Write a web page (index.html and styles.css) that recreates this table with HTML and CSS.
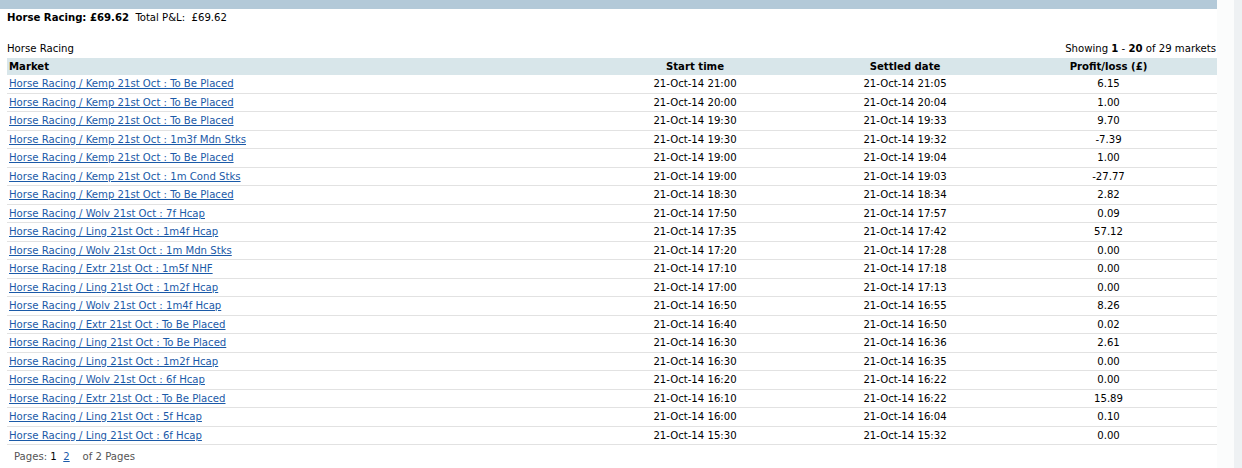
FILE: index.html
```html
<!DOCTYPE html>
<html>
<head>
<meta charset="utf-8">
<link rel="stylesheet" href="styles.css">
</head>
<body>
<div class="page">
  <div class="main">
    <div class="topbar"></div>
    <div class="summary"><b>Horse Racing: £69.62</b>&nbsp;&nbsp;Total P&amp;L:&nbsp;&nbsp;£69.62</div>
    <div class="labelrow">
      <span>Horse Racing</span>
      <span>Showing <b>1</b> - <b>20</b> of 29 markets</span>
    </div>
    <table class="markets">
      <colgroup>
        <col class="c-market"><col class="c-start"><col class="c-settled"><col class="c-pl">
      </colgroup>
      <thead>
        <tr><th class="left">Market</th><th>Start time</th><th>Settled date</th><th class="pl">Profit/loss (£)</th></tr>
      </thead>
      <tbody>
        <tr><td class="left"><a href="#">Horse Racing / Kemp 21st Oct : To Be Placed</a></td><td>21-Oct-14 21:00</td><td>21-Oct-14 21:05</td><td class="pl">6.15</td></tr>
        <tr><td class="left"><a href="#">Horse Racing / Kemp 21st Oct : To Be Placed</a></td><td>21-Oct-14 20:00</td><td>21-Oct-14 20:04</td><td class="pl">1.00</td></tr>
        <tr><td class="left"><a href="#">Horse Racing / Kemp 21st Oct : To Be Placed</a></td><td>21-Oct-14 19:30</td><td>21-Oct-14 19:33</td><td class="pl">9.70</td></tr>
        <tr><td class="left"><a href="#">Horse Racing / Kemp 21st Oct : 1m3f Mdn Stks</a></td><td>21-Oct-14 19:30</td><td>21-Oct-14 19:32</td><td class="pl">-7.39</td></tr>
        <tr><td class="left"><a href="#">Horse Racing / Kemp 21st Oct : To Be Placed</a></td><td>21-Oct-14 19:00</td><td>21-Oct-14 19:04</td><td class="pl">1.00</td></tr>
        <tr><td class="left"><a href="#">Horse Racing / Kemp 21st Oct : 1m Cond Stks</a></td><td>21-Oct-14 19:00</td><td>21-Oct-14 19:03</td><td class="pl">-27.77</td></tr>
        <tr><td class="left"><a href="#">Horse Racing / Kemp 21st Oct : To Be Placed</a></td><td>21-Oct-14 18:30</td><td>21-Oct-14 18:34</td><td class="pl">2.82</td></tr>
        <tr><td class="left"><a href="#">Horse Racing / Wolv 21st Oct : 7f Hcap</a></td><td>21-Oct-14 17:50</td><td>21-Oct-14 17:57</td><td class="pl">0.09</td></tr>
        <tr><td class="left"><a href="#">Horse Racing / Ling 21st Oct : 1m4f Hcap</a></td><td>21-Oct-14 17:35</td><td>21-Oct-14 17:42</td><td class="pl">57.12</td></tr>
        <tr><td class="left"><a href="#">Horse Racing / Wolv 21st Oct : 1m Mdn Stks</a></td><td>21-Oct-14 17:20</td><td>21-Oct-14 17:28</td><td class="pl">0.00</td></tr>
        <tr><td class="left"><a href="#">Horse Racing / Extr 21st Oct : 1m5f NHF</a></td><td>21-Oct-14 17:10</td><td>21-Oct-14 17:18</td><td class="pl">0.00</td></tr>
        <tr><td class="left"><a href="#">Horse Racing / Ling 21st Oct : 1m2f Hcap</a></td><td>21-Oct-14 17:00</td><td>21-Oct-14 17:13</td><td class="pl">0.00</td></tr>
        <tr><td class="left"><a href="#">Horse Racing / Wolv 21st Oct : 1m4f Hcap</a></td><td>21-Oct-14 16:50</td><td>21-Oct-14 16:55</td><td class="pl">8.26</td></tr>
        <tr><td class="left"><a href="#">Horse Racing / Extr 21st Oct : To Be Placed</a></td><td>21-Oct-14 16:40</td><td>21-Oct-14 16:50</td><td class="pl">0.02</td></tr>
        <tr><td class="left"><a href="#">Horse Racing / Ling 21st Oct : To Be Placed</a></td><td>21-Oct-14 16:30</td><td>21-Oct-14 16:36</td><td class="pl">2.61</td></tr>
        <tr><td class="left"><a href="#">Horse Racing / Ling 21st Oct : 1m2f Hcap</a></td><td>21-Oct-14 16:30</td><td>21-Oct-14 16:35</td><td class="pl">0.00</td></tr>
        <tr><td class="left"><a href="#">Horse Racing / Wolv 21st Oct : 6f Hcap</a></td><td>21-Oct-14 16:20</td><td>21-Oct-14 16:22</td><td class="pl">0.00</td></tr>
        <tr><td class="left"><a href="#">Horse Racing / Extr 21st Oct : To Be Placed</a></td><td>21-Oct-14 16:10</td><td>21-Oct-14 16:22</td><td class="pl">15.89</td></tr>
        <tr><td class="left"><a href="#">Horse Racing / Ling 21st Oct : 5f Hcap</a></td><td>21-Oct-14 16:00</td><td>21-Oct-14 16:04</td><td class="pl">0.10</td></tr>
        <tr><td class="left"><a href="#">Horse Racing / Ling 21st Oct : 6f Hcap</a></td><td>21-Oct-14 15:30</td><td>21-Oct-14 15:32</td><td class="pl">0.00</td></tr>
      </tbody>
    </table>
    <div class="pager">Pages: <span class="cur">1</span>&nbsp;&nbsp;<a href="#">2</a>&nbsp;&nbsp;&nbsp;&nbsp;of 2 Pages</div>
  </div>
  <div class="gutter"></div>
  <div class="rail"></div>
</div>
</body>
</html>
```

FILE: styles.css
```css
html, body {
  margin: 0;
  padding: 0;
  background: #ffffff;
}
body {
  font-family: "DejaVu Sans Condensed", "DejaVu Sans", sans-serif;
  font-size: 11.25px;
  color: #000000;
}
.page {
  display: flex;
  height: 468px;
}
.main {
  width: 1217px;
  flex: none;
}
.gutter {
  width: 17px;
  flex: none;
  background: #fbfcfc;
}
.rail {
  flex: 1;
  background: #eef1f3;
}
.topbar {
  height: 9px;
  background: #b3c9d8;
}
.summary {
  padding-left: 7px;
  margin-top: 2px;
  line-height: 14px;
}
.labelrow {
  display: flex;
  justify-content: space-between;
  margin-top: 17px;
  padding-left: 7px;
  padding-right: 1px;
  line-height: 14px;
}
.markets {
  margin-left: 7px;
  margin-top: 2px;
  width: 1210px;
  border-collapse: separate;
  border-spacing: 0;
  table-layout: fixed;
}
.c-market { width: 583px; }
.c-start { width: 210px; }
.c-settled { width: 210px; }
.c-pl { width: 207px; }
.markets th {
  background: #d8e6ea;
  font-weight: bold;
  height: 17px;
  line-height: 17px;
  padding: 0;
  text-align: center;
}
.markets td {
  line-height: 17.5px;
  padding: 0;
  text-align: center;
  border-bottom: 1px solid #e2e2e2;
  white-space: nowrap;
}
.markets .left {
  text-align: left;
  padding-left: 2px;
}
.markets .pl {
  padding-right: 10px;
}
.markets a {
  color: #1b5aa8;
  text-decoration: underline;
}
.pager {
  padding-left: 14px;
  margin-top: 5px;
  line-height: 14px;
  color: #555555;
}
.pager .cur {
  color: #000000;
}
.pager a {
  color: #1b5aa8;
}
```
